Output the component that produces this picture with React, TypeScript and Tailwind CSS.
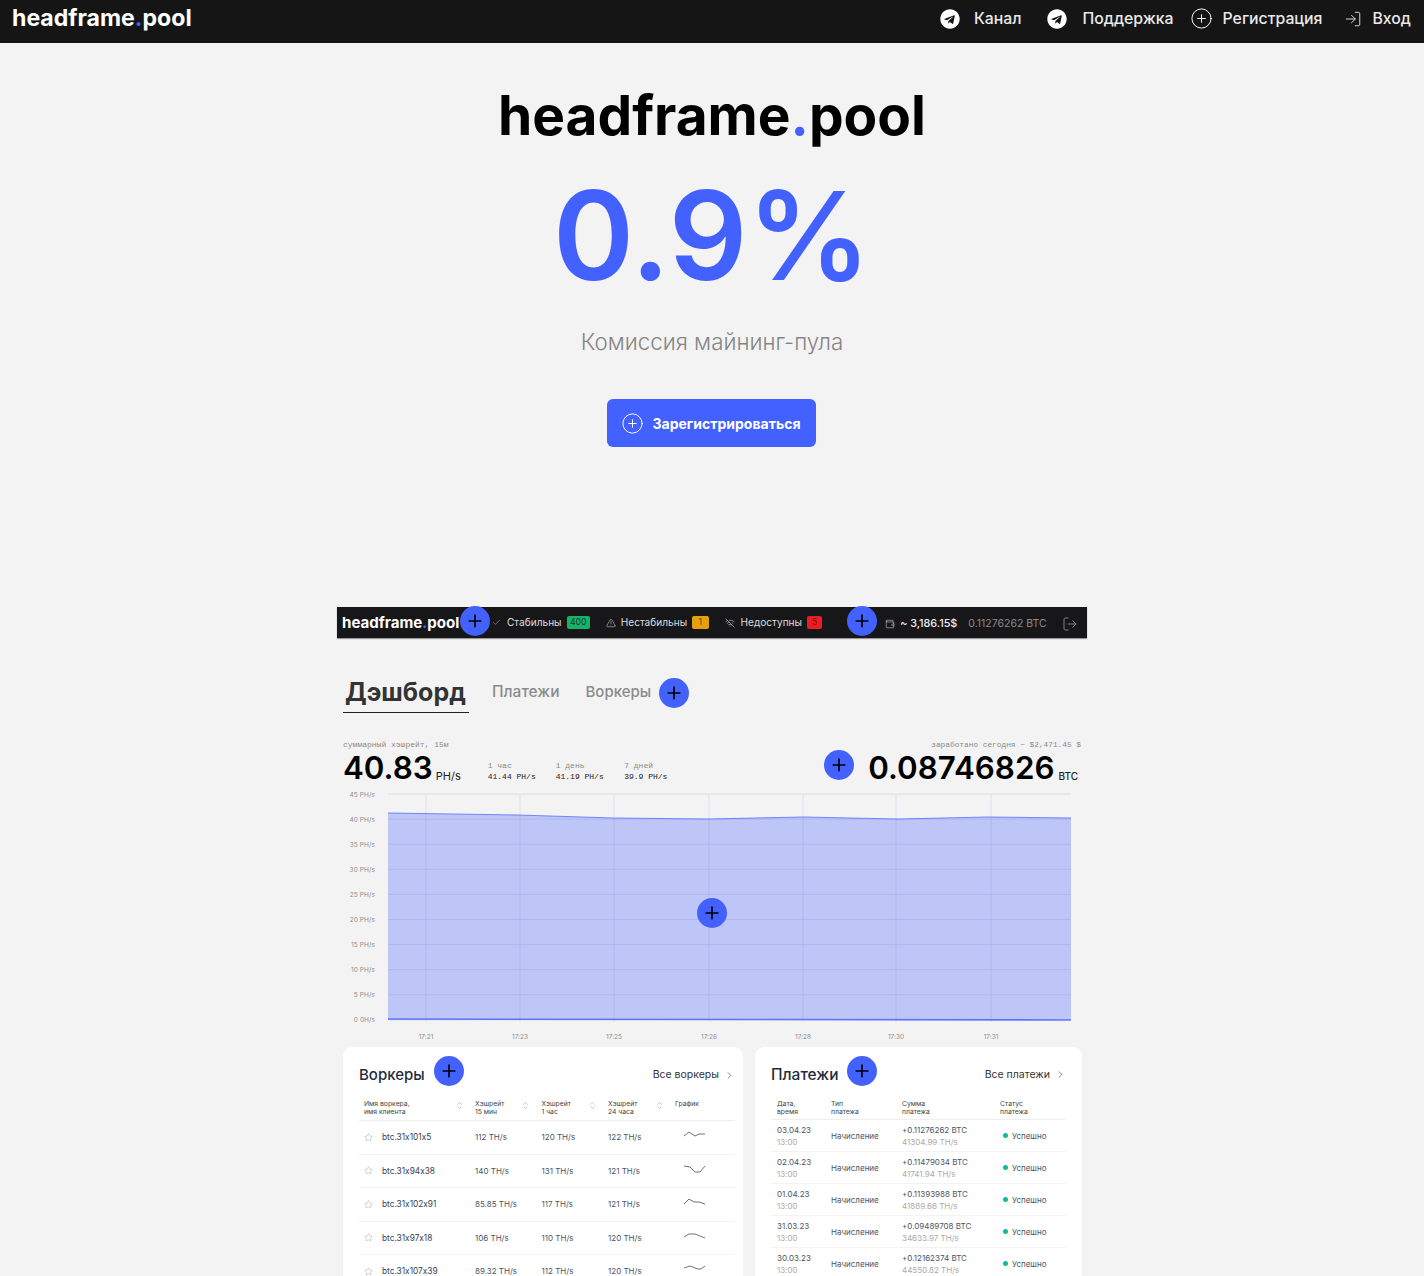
import { FaTelegram } from "react-icons/fa";
import { Check, ChevronRight, ChevronsUpDown, CirclePlus, LogIn, LogOut, Plus, Star, TriangleAlert, Wallet, WifiOff } from "lucide-react";

const inter = "font-['Inter','Liberation_Sans',sans-serif]";
const mono = "font-['Liberation_Mono','DejaVu_Sans_Mono',monospace]";

function Logo({ className }: { className: string }) {
  return (
    <span className={`font-bold ${className}`}>
      headframe<span className="text-[#4361ff]">.</span>pool
    </span>
  );
}

function Dot({ className }: { className: string }) {
  return (
    <span className={`absolute flex h-[30px] w-[30px] items-center justify-center rounded-full bg-[#4361ff] text-black ${className}`}>
      <Plus size={20} strokeWidth={2} />
    </span>
  );
}

function NavItem({ icon, text, gap, className }: { icon: React.ReactNode; text: string; gap: string; className?: string }) {
  return (
    <span className={`flex items-center ${gap} ${className ?? ""}`}>
      {icon}
      <span className="text-[15.8px] font-medium text-[#e9e9e9]">{text}</span>
    </span>
  );
}

const yLabels = ["45", "40", "35", "30", "25", "20", "15", "10", "5", "0"];
const xTicks: [number, string][] = [[38, "17:21"], [132, "17:23"], [226, "17:25"], [321, "17:26"], [415, "17:28"], [508, "17:30"], [603, "17:31"]];

function HashChart() {
  const top = 7;
  const step = 25.1;
  return (
    <svg width="739" height="258" viewBox="0 0 739 258" className="block">
      <g transform="translate(-5,0)">
        {yLabels.map((l, i) => (
          <g key={l}>
            <text x={37} y={top + i * step + 2.5} textAnchor="end" fontSize="6.5" letterSpacing="0.1" fill="#8d8d8d" fontFamily="Inter">
              {l === "0" ? "0 0H/s" : `${l} PH/s`}
            </text>
            <line x1={50} x2={733} y1={top + i * step} y2={top + i * step} stroke="#dcdeea" strokeWidth="1" />
          </g>
        ))}
        <path d="M50 26 L180 28 L276 31 L370 32 L465 30 L560 32 L650 30 L733 31 L733 233 L50 233 Z" fill="#4361ff" fillOpacity="0.3" />
        <path d="M50 26 L180 28 L276 31 L370 32 L465 30 L560 32 L650 30 L733 31" fill="none" stroke="#4361ff" strokeOpacity="0.7" strokeWidth="1" />
        <path d="M50 232 L733 233" fill="none" stroke="#4361ff" strokeOpacity="0.8" strokeWidth="1.6" />
        {xTicks.map(([x, t]) => (
          <g key={t}>
            <line x1={x + 50} x2={x + 50} y1={top} y2={235} stroke="#3a4ab0" strokeOpacity="0.1" />
            <text x={x + 50} y={252} textAnchor="middle" fontSize="6.5" fill="#8d8d8d" fontFamily="Inter">{t}</text>
          </g>
        ))}
      </g>
    </svg>
  );
}

const workers: [string, string, string, string, string][] = [
  ["btc.31x101x5", "112 TH/s", "120 TH/s", "122 TH/s", "M1 5 L6 1 L12 5 L16 3 L22 3"],
  ["btc.31x94x38", "140 TH/s", "131 TH/s", "121 TH/s", "M1 1 L7 2 L12 7 L17 7 L22 1"],
  ["btc.31x102x91", "85.85 TH/s", "117 TH/s", "121 TH/s", "M1 6 L6 1 L11 4 L16 4 L22 6"],
  ["btc.31x97x18", "106 TH/s", "110 TH/s", "120 TH/s", "M1 5 L6 2 L12 2 L17 4 L22 6"],
  ["btc.31x107x39", "89.32 TH/s", "112 TH/s", "120 TH/s", "M1 3 L7 1 L15 4 L18 4 L22 1"],
];

const payments: [string, string, string][] = [
  ["03.04.23", "+0.11276262 BTC", "41304.99 TH/s"],
  ["02.04.23", "+0.11479034 BTC", "41741.94 TH/s"],
  ["01.04.23", "+0.11393988 BTC", "41889.66 TH/s"],
  ["31.03.23", "+0.09489708 BTC", "34633.97 TH/s"],
  ["30.03.23", "+0.12162374 BTC", "44550.82 TH/s"],
];

const workerCols = "grid grid-cols-[111px_66.5px_66.5px_67px_60px]";
const payCols = "grid grid-cols-[54px_71px_98px_70px]";

function Sort({ className }: { className?: string }) {
  return <ChevronsUpDown size={9} strokeWidth={1} className={`absolute top-[1px] text-[#777] ${className ?? ""}`} />;
}

export default function App() {
  return (
    <div className={`relative h-[1276px] overflow-hidden bg-[#f3f3f3] [font-feature-settings:'calt'_0] ${inter}`}>
      <header className="flex h-[43px] items-center justify-between bg-[#151515] pb-[6px] pl-3 pr-[13px]">
        <Logo className="text-[23.1px] leading-none text-white" />
        <nav className="flex items-center">
          <NavItem gap="gap-[14px]" className="mr-[26px]" icon={<FaTelegram size={20} className="text-white" />} text="Канал" />
          <NavItem gap="gap-[15px]" className="mr-[16px]" icon={<FaTelegram size={20} className="text-white" />} text="Поддержка" />
          <NavItem gap="gap-[10px]" className="mr-[22px]" icon={<CirclePlus size={23} strokeWidth={1} className="text-white" />} text="Регистрация" />
          <NavItem gap="gap-[10px]" icon={<LogIn size={18} strokeWidth={1.1} className="text-white" />} text="Вход" />
        </nav>
      </header>

      <section className="flex flex-col items-center">
        <Logo className="mt-[38px] h-[68px] text-[55px] leading-[68px] text-black" />
        <div className="mt-[2px] h-[170px] text-[123px] font-semibold leading-[170px] text-[#4361ff]">0.9%</div>
        <div className="mt-[6px] h-[30px] text-[22.3px] font-light leading-[30px] text-[#858585]">Комиссия майнинг-пула</div>
        <button className="mr-[1px] mt-[42px] flex h-[48px] w-[209px] items-center justify-center gap-[9px] rounded-[6px] bg-[#4361ff] pr-[2px] text-[14px] font-bold text-white">
          <CirclePlus size={23} strokeWidth={1} />
          Зарегистрироваться
        </button>
      </section>

      <section className="relative mx-auto mt-[160px] w-[750px]">
        <div className="flex h-[31px] items-center bg-[#17171a] pl-[5px] pr-[9px] shadow-[0_1px_1px_#999]">
          <Logo className="w-[150px] text-[15.1px] leading-none text-white" />
          <Check size={9} strokeWidth={1.3} className="text-[#ccc]" />
          <span className="ml-[6px] text-[10.1px] text-[#ddd]">Стабильны</span>
          <span className="ml-[5px] rounded-[2px] bg-[#17b26a] px-[3.5px] text-[8.5px] leading-[13px] text-[#0b3d26]">400</span>
          <TriangleAlert size={10} strokeWidth={1.3} className="ml-[16px] text-[#ddd]" />
          <span className="ml-[5px] text-[10.1px] text-[#ddd]">Нестабильны</span>
          <span className="ml-[5px] rounded-[2px] bg-[#e5a00d] px-[6.5px] text-[8.5px] leading-[13px] text-[#6b4a00]">1</span>
          <WifiOff size={10} strokeWidth={1.3} className="ml-[16px] text-[#ddd]" />
          <span className="ml-[6px] text-[10.1px] text-[#ddd]">Недоступны</span>
          <span className="ml-[5px] rounded-[2px] bg-[#ec1c24] px-[5px] text-[8.5px] leading-[13px] text-[#7a0a0e]">5</span>
          <Wallet size={10} strokeWidth={1.3} className="ml-[63px] mt-[3px] text-[#ddd]" />
          <span className="ml-[5px] mt-[3px] text-[10.8px] font-medium text-[#eee]">~ 3,186.15$</span>
          <span className="ml-[11px] mt-[3px] text-[10.5px] text-[#8a8a8a]">0.11276262 BTC</span>
          <LogOut size={16} strokeWidth={1.2} className="ml-auto mt-[2px] text-[#999]" />
        </div>

        <div className="px-[6px]">
          <div className="mt-[38px] flex h-[37px] items-start">
            <div className="w-[126px] border-b border-[#222] pb-[3px] pl-[2px] text-[25px] font-bold leading-[33px] text-[#333]">Дэшборд</div>
            <div className="ml-[23px] text-[15.5px] font-medium leading-[31px] text-[#8b8b8b]">Платежи</div>
            <div className="ml-[26px] text-[15px] font-medium leading-[31px] text-[#8b8b8b]">Воркеры</div>
          </div>

          <div className="mt-[26px] flex justify-between">
            <div>
              <div className={`${mono} text-[8px] leading-[12px] text-[#8a8a8a]`}>суммарный хэшрейт, 15м</div>
              <div className="flex items-end">
                <span className="text-[31.3px] font-semibold leading-[34px] text-black">40.83</span>
                <span className="mb-[2px] ml-[3px] text-[11px] leading-[14px] text-[#222]">PH/s</span>
                {[["1 час", "41.44 PH/s", "ml-[27px] w-[68px]"], ["1 день", "41.19 PH/s", "w-[68.5px]"], ["7 дней", "39.9 PH/s", "w-[60px]"]].map(([a, b, c]) => (
                  <div key={a} className={`${mono} ${c} mb-[3px] text-[8px] leading-[11px]`}>
                    <div className="text-[#8a8a8a]">{a}</div>
                    <div className="text-[#222]">{b}</div>
                  </div>
                ))}
              </div>
            </div>
            <div className="flex flex-col items-end">
              <div className={`${mono} text-[7.8px] leading-[12px] text-[#8a8a8a]`}>заработано сегодня ~ $2,471.45 $</div>
              <div className="flex items-end pr-[3px]">
                <span className="text-[31.3px] font-semibold leading-[34px] text-black">0.08746826</span>
                <span className="mb-[2px] ml-[4px] text-[10px] font-medium leading-[13px] text-[#222]">BTC</span>
              </div>
            </div>
          </div>

          <div className="mt-[2px]"><HashChart /></div>

          <div className="mt-[2px] grid grid-cols-[400px_327px] gap-[12px]">
            <div className="h-[240px] rounded-t-[9px] bg-white pl-[16px] pr-[8px] text-[#4b5563]">
              <div className="flex h-[53px] items-center justify-between pr-0 pt-[3px]">
                <span className="text-[15px] font-medium text-[#1f2d3d]">Воркеры</span>
                <span className="flex items-center gap-[5px] text-[10.5px] text-[#333]">Все воркеры <ChevronRight size={11} strokeWidth={1.3} /></span>
              </div>
              <div className={`${workerCols} relative h-[21px] border-b border-[#eee] pl-[5px] text-[6.8px] leading-[8px] text-[#444]`}>
                <div>Имя воркера,<br />имя клиента<Sort className="left-[96px]" /></div>
                <div>Хэшрейт<br />15 мин<Sort className="left-[162px]" /></div>
                <div>Хэшрейт<br />1 час<Sort className="left-[229px]" /></div>
                <div>Хэшрейт<br />24 часа<Sort className="left-[296px]" /></div>
                <div>График</div>
              </div>
              {workers.map(([n, a, b, c, d]) => (
                <div key={n} className={`${workerCols} h-[33.5px] items-center border-b border-[#f3f3f3] pl-[5px] text-[8px]`}>
                  <div className="flex items-center gap-[9px] text-[8.3px] text-[#374151]"><Star size={9} strokeWidth={1} className="text-[#888]" />{n}</div>
                  <div>{a}</div>
                  <div>{b}</div>
                  <div>{c}</div>
                  <svg width="23" height="8" viewBox="0 0 23 8" fill="none" stroke="#333" strokeWidth="0.7" className="ml-[8px] mt-[-4px]"><path d={d} /></svg>
                </div>
              ))}
            </div>

            <div className="h-[240px] rounded-t-[9px] bg-white px-[16px] text-[#4b5563]">
              <div className="flex h-[53px] items-center justify-between pr-0 pt-[2px]">
                <span className="text-[15.5px] font-medium text-[#1f2d3d]">Платежи</span>
                <span className="flex items-center gap-[5px] text-[10.5px] text-[#333]">Все платежи <ChevronRight size={11} strokeWidth={1.3} /></span>
              </div>
              <div className={`${payCols} h-[20px] border-b border-[#eee] pl-[6px] text-[6.8px] leading-[8px] text-[#444]`}>
                <div>Дата,<br />время</div>
                <div>Тип<br />платежа</div>
                <div>Сумма<br />платежа</div>
                <div>Статус<br />платежа</div>
              </div>
              {payments.map(([d, s, h]) => (
                <div key={d} className={`${payCols} h-[32px] items-center border-b border-[#f3f3f3] pl-[6px] text-[8px] leading-[12px]`}>
                  <div>{d}<br /><span className="text-[#aaa]">13:00</span></div>
                  <div>Начисление</div>
                  <div>{s}<br /><span className="text-[#aaa]">{h}</span></div>
                  <div className="flex items-center gap-[4px] pl-[3px]"><span className="h-[5px] w-[5px] rounded-full bg-[#14b8a6]" />Успешно</div>
                </div>
              ))}
            </div>
          </div>
        </div>

        <Dot className="left-[123px] top-[-1px]" />
        <Dot className="left-[510px] top-[-1px]" />
        <Dot className="left-[322px] top-[71px]" />
        <Dot className="left-[487px] top-[143px]" />
        <Dot className="left-[360px] top-[291px]" />
        <Dot className="left-[97px] top-[449px]" />
        <Dot className="left-[510px] top-[449px]" />
      </section>
    </div>
  );
}
